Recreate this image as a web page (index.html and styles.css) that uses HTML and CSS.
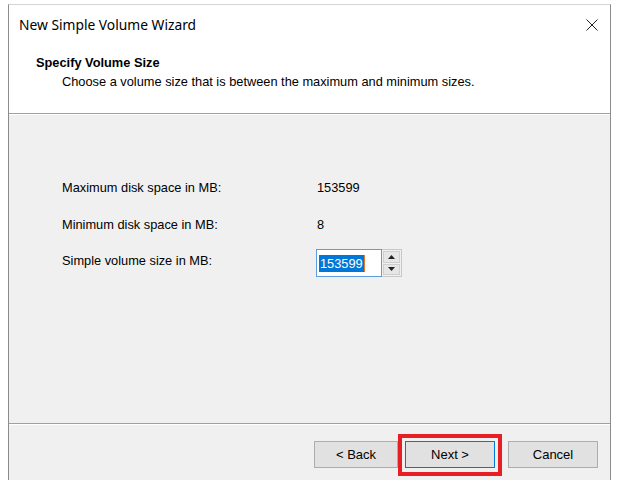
FILE: index.html
```html
<!DOCTYPE html>
<html>
<head>
<meta charset="utf-8">
<link rel="stylesheet" href="styles.css">
</head>
<body>
<div class="window">
  <div class="titlebar">
    <span class="title">New Simple Volume Wizard</span>
    <svg class="close" width="12" height="12" viewBox="0 0 12 12"><path d="M0.5 0.5 L11.5 11.5 M11.5 0.5 L0.5 11.5" stroke="#222" stroke-width="1" fill="none"/></svg>
  </div>
  <div class="header">
    <div class="h-title">Specify Volume Size</div>
    <div class="h-sub">Choose a volume size that is between the maximum and minimum sizes.</div>
  </div>
  <div class="sep"></div>
  <div class="content">
    <div class="row r1"><span class="label">Maximum disk space in MB:</span><span class="value">153599</span></div>
    <div class="row r2"><span class="label">Minimum disk space in MB:</span><span class="value">8</span></div>
    <div class="row r3"><span class="label">Simple volume size in MB:</span>
      <div class="spin">
        <div class="spin-input"><span class="sel">153599</span><span class="caret"></span></div>
        <div class="spin-btns">
          <div class="spin-btn"><svg width="7" height="4" viewBox="0 0 7 4"><path d="M0 4 L3.5 0 L7 4 Z" fill="#222"/></svg></div>
          <div class="spin-btn"><svg width="7" height="4" viewBox="0 0 7 4"><path d="M0 0 L3.5 4 L7 0 Z" fill="#222"/></svg></div>
        </div>
      </div>
    </div>
  </div>
  <div class="sep"></div>
  <div class="footer">
    <button class="btn back">&lt; Back</button>
    <span class="next-wrap"><button class="btn next">Next &gt;</button></span>
    <button class="btn cancel">Cancel</button>
  </div>
</div>
</body>
</html>
```
FILE: styles.css
```css
html, body {
  margin: 0;
  padding: 0;
  background: #ffffff;
}
body {
  font-family: "Liberation Sans", Arial, sans-serif;
  font-size: 12.8px;
  color: #000;
}
.window {
  margin: 4px 0 0 8px;
  width: 601px;
  height: 475px;
  border-top: 1px solid #d4d4d4;
  border-left: 1px solid #8c8c8c;
  border-right: 1px solid #8c8c8c;
  display: flex;
  flex-direction: column;
  background: #f0f0f0;
}
.titlebar {
  height: 39px;
  background: #fff;
  display: flex;
  align-items: center;
  justify-content: space-between;
  padding: 0 12px 0 10px;
}
.title {
  font-family: "Noto Sans", sans-serif;
  font-size: 13.8px;
  color: #000;
}
.close {
  display: block;
}
.header {
  height: 69px;
  background: #fff;
  padding-left: 27px;
  box-sizing: border-box;
  padding-top: 11px;
}
.h-title {
  font-weight: bold;
  line-height: 16px;
}
.h-sub {
  line-height: 17px;
  margin-top: 2px;
  padding-left: 26px;
}
.sep {
  height: 1px;
  background: #a0a0a0;
  border-bottom: 1px solid #ffffff;
}
.content {
  flex: 1;
  padding: 65px 0 0 53px;
}
.row {
  display: flex;
  line-height: 15px;
}
.r1 {
  height: 15px;
  margin-bottom: 22px;
}
.r2 {
  height: 15px;
  margin-bottom: 17px;
}
.r3 {
  align-items: flex-start;
}
.r3 .label {
  padding-top: 4px;
}
.label {
  width: 254px;
}
.value {
  padding-left: 1px;
}
.spin {
  display: flex;
  height: 28px;
}
.spin-input {
  width: 62px;
  height: 26px;
  border: 1px solid #5b9fe0;
  background: #fff;
  display: flex;
  align-items: center;
  padding-left: 2px;
}
.sel {
  background: #0078d7;
  color: #fff;
  line-height: 17px;
  padding: 0 1px;
}
.caret {
  width: 1px;
  height: 17px;
  background: #e8792a;
}
.spin-btns {
  display: flex;
  flex-direction: column;
  width: 20px;
  border: 1px solid #c8c8c8;
  border-left: none;
  box-sizing: border-box;
  background: #f0f0f0;
  padding: 1px;
  gap: 1px;
}
.spin-btn {
  flex: 1;
  background: #e6e6e6;
  border: 1px solid #cfcfcf;
  display: flex;
  align-items: center;
  justify-content: center;
}
.spin-btn svg {
  display: block;
}
.footer {
  height: 55px;
  display: flex;
  justify-content: flex-end;
  align-items: flex-start;
  padding: 16px 12px 0 0;
  box-sizing: border-box;
}
.btn {
  font-family: "Liberation Sans", Arial, sans-serif;
  font-size: 13px;
  color: #000;
  width: 84px;
  height: 27px;
  background: #e1e1e1;
  border: 1px solid #adadad;
  padding: 0;
  margin: 0;
  display: block;
}
.next-wrap {
  position: relative;
  display: block;
  margin-left: 7px;
  margin-right: 13px;
}
.next {
  width: 90px;
  border-color: #0078d7;
}
.next-wrap::after {
  content: "";
  position: absolute;
  left: -7px;
  top: -7px;
  right: -7px;
  bottom: -8px;
  border: 4px solid #e81e25;
}
.cancel {
  width: 90px;
}
```
